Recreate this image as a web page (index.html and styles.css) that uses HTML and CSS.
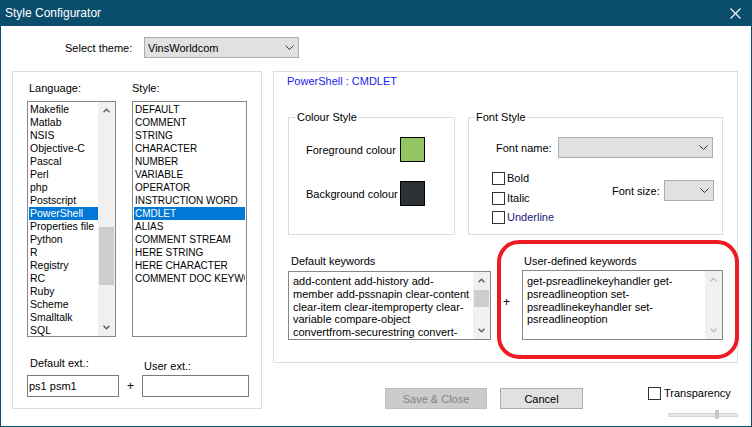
FILE: index.html
```html
<!DOCTYPE html>
<html>
<head>
<meta charset="utf-8">
<title>Style Configurator</title>
<link rel="stylesheet" href="styles.css">
</head>
<body>
<div class="window">
  <div class="titlebar">
    <span class="title">Style Configurator</span>
    <svg class="close" width="11" height="11" viewBox="0 0 11 11"><path d="M0.5 0.5L10.5 10.5M10.5 0.5L0.5 10.5" stroke="#fff" stroke-width="1.1" fill="none"/></svg>
  </div>
  <div class="content">
    <div class="theme-row">
      <span class="theme-label">Select theme:</span>
      <div class="combo theme-combo"><span class="combo-text">VinsWorldcom</span><svg class="chev" width="9" height="5" viewBox="0 0 9 5"><path d="M0.5 0.5L4.5 4.5L8.5 0.5" stroke="#333" fill="none"/></svg></div>
    </div>
    <div class="main">
      <div class="group left-group">
        <div class="lists">
          <div class="lang-col">
            <div class="lbl lang-lbl">Language:</div>
            <div class="listbox lang-list">
              <div class="items">
                <div class="item">Makefile</div>
                <div class="item">Matlab</div>
                <div class="item">NSIS</div>
                <div class="item">Objective-C</div>
                <div class="item">Pascal</div>
                <div class="item">Perl</div>
                <div class="item">php</div>
                <div class="item">Postscript</div>
                <div class="item sel">PowerShell</div>
                <div class="item">Properties file</div>
                <div class="item">Python</div>
                <div class="item">R</div>
                <div class="item">Registry</div>
                <div class="item">RC</div>
                <div class="item">Ruby</div>
                <div class="item">Scheme</div>
                <div class="item">Smalltalk</div>
                <div class="item">SQL</div>
              </div>
              <div class="vscroll">
                <div class="sb-btn"><svg width="7" height="5" viewBox="0 0 7 5"><path d="M0.5 4.2L3.5 1.2L6.5 4.2" stroke="#606060" stroke-width="1.5" fill="none"/></svg></div>
                <div class="sb-track"><div class="thumb lang-thumb"></div></div>
                <div class="sb-btn"><svg width="7" height="5" viewBox="0 0 7 5"><path d="M0.5 0.8L3.5 3.8L6.5 0.8" stroke="#606060" stroke-width="1.5" fill="none"/></svg></div>
              </div>
            </div>
          </div>
          <div class="style-col">
            <div class="lbl">Style:</div>
            <div class="listbox style-list">
              <div class="items">
                <div class="item">DEFAULT</div>
                <div class="item">COMMENT</div>
                <div class="item">STRING</div>
                <div class="item">CHARACTER</div>
                <div class="item">NUMBER</div>
                <div class="item">VARIABLE</div>
                <div class="item">OPERATOR</div>
                <div class="item">INSTRUCTION WORD</div>
                <div class="item sel">CMDLET</div>
                <div class="item">ALIAS</div>
                <div class="item">COMMENT STREAM</div>
                <div class="item">HERE STRING</div>
                <div class="item">HERE CHARACTER</div>
                <div class="item">COMMENT DOC KEYWORD</div>
              </div>
            </div>
          </div>
        </div>
        <div class="ext-row">
          <div class="def-ext">
            <div class="lbl ext-lbl">Default ext.:</div>
            <div class="input">ps1 psm1</div>
          </div>
          <div class="plus">+</div>
          <div class="user-ext">
            <div class="lbl ext-lbl user-ext-lbl">User ext.:</div>
            <div class="input"></div>
          </div>
        </div>
      </div>
      <div class="right-col">
        <div class="group right-group">
          <div class="style-title">PowerShell : CMDLET</div>
          <div class="boxes">
            <div class="box colour-box">
              <span class="legend">Colour Style</span>
              <div class="colour-row"><span class="clabel">Foreground colour</span><div class="swatch fg"></div></div>
              <div class="colour-row"><span class="clabel">Background colour</span><div class="swatch bg"></div></div>
            </div>
            <div class="box font-box">
              <span class="legend font-legend">Font Style</span>
              <div class="fontname-row">
                <span class="fn-label">Font name:</span>
                <div class="combo fn-combo"><svg class="chev" width="9" height="5" viewBox="0 0 9 5"><path d="M0.5 0.5L4.5 4.5L8.5 0.5" stroke="#333" fill="none"/></svg></div>
              </div>
              <div class="font-lower">
                <div class="checks">
                  <div class="check"><span class="cb"></span><span class="cb-text">Bold</span></div>
                  <div class="check"><span class="cb"></span><span class="cb-text">Italic</span></div>
                  <div class="check"><span class="cb"></span><span class="cb-text under">Underline</span></div>
                </div>
                <div class="fontsize">
                  <span class="fs-label">Font size:</span>
                  <div class="combo fs-combo"><svg class="chev" width="9" height="5" viewBox="0 0 9 5"><path d="M0.5 0.5L4.5 4.5L8.5 0.5" stroke="#333" fill="none"/></svg></div>
                </div>
              </div>
            </div>
          </div>
          <div class="kw-row">
            <div class="def-kw">
              <div class="lbl kw-lbl">Default keywords</div>
              <div class="textarea def-ta">
                <div class="ta-text">
                  <div class="ta-line">add-content add-history add-</div>
                  <div class="ta-line">member add-pssnapin clear-content</div>
                  <div class="ta-line">clear-item clear-itemproperty clear-</div>
                  <div class="ta-line">variable compare-object</div>
                  <div class="ta-line">convertfrom-securestring convert-</div>
                </div>
                <div class="vscroll">
                  <div class="sb-btn"><svg width="7" height="5" viewBox="0 0 7 5"><path d="M0.5 4.2L3.5 1.2L6.5 4.2" stroke="#606060" stroke-width="1.5" fill="none"/></svg></div>
                  <div class="sb-track"><div class="thumb kw-thumb"></div></div>
                  <div class="sb-btn"><svg width="7" height="5" viewBox="0 0 7 5"><path d="M0.5 0.8L3.5 3.8L6.5 0.8" stroke="#606060" stroke-width="1.5" fill="none"/></svg></div>
                </div>
              </div>
            </div>
            <div class="kw-plus">+</div>
            <div class="user-kw">
              <div class="lbl kw-lbl user-kw-lbl">User-defined keywords</div>
              <div class="textarea user-ta">
                <div class="ta-text user-text">
                  <div class="ta-line">get-psreadlinekeyhandler get-</div>
                  <div class="ta-line">psreadlineoption set-</div>
                  <div class="ta-line">psreadlinekeyhandler set-</div>
                  <div class="ta-line">psreadlineoption</div>
                </div>
                <div class="vscroll disabled">
                  <div class="sb-btn"><svg width="7" height="5" viewBox="0 0 7 5"><path d="M0.5 4.2L3.5 1.2L6.5 4.2" stroke="#c0c0c0" stroke-width="1.5" fill="none"/></svg></div>
                  <div class="sb-track"></div>
                  <div class="sb-btn"><svg width="7" height="5" viewBox="0 0 7 5"><path d="M0.5 0.8L3.5 3.8L6.5 0.8" stroke="#c0c0c0" stroke-width="1.5" fill="none"/></svg></div>
                </div>
              </div>
            </div>
          </div>
          <div class="ring"></div>
        </div>
        <div class="bottom-row">
          <div class="btn save">Save &amp; Close</div>
          <div class="btn cancel">Cancel</div>
          <div class="transp">
            <div class="transp-check"><span class="cb"></span><span class="cb-text">Transparency</span></div>
            <div class="slider"><div class="slider-track"></div><div class="slider-thumb"></div></div>
          </div>
        </div>
      </div>
    </div>
  </div>
</div>
</body>
</html>
```

FILE: styles.css
```css
html, body {
  margin: 0;
  padding: 0;
}
body {
  width: 752px;
  height: 427px;
  overflow: hidden;
  background: #ffffff;
  font-family: "Liberation Sans", Arial, sans-serif;
  font-size: 11px;
  color: #000;
}
.window {
  width: 752px;
  height: 427px;
  box-sizing: border-box;
  border: 1px solid #0b4d6d;
  border-top: none;
  display: flex;
  flex-direction: column;
  overflow: hidden;
}
.titlebar {
  height: 26px;
  flex: none;
  margin: 0 -1px;
  background: #0b4d6d;
  display: flex;
  align-items: center;
  padding-left: 5px;
  color: #fff;
  font-size: 12px;
}
.close {
  margin-left: auto;
  margin-right: 11px;
}
.content {
  flex: 1;
}
.theme-row {
  display: flex;
  align-items: center;
  height: 21px;
  margin-top: 11px;
}
.theme-label {
  margin-left: 64px;
  width: 79px;
}
.combo {
  box-sizing: border-box;
  height: 21px;
  background: #e1e1e1;
  border: 1px solid #adadad;
  display: flex;
  align-items: center;
  padding-left: 3px;
}
.combo .chev {
  margin-left: auto;
  margin-right: 4px;
}
.theme-combo {
  width: 155px;
}
.main {
  display: flex;
  margin-top: 13px;
  padding-left: 11px;
  gap: 11px;
}
.group {
  box-sizing: border-box;
  border: 1px solid #dcdcdc;
}
.left-group {
  width: 250px;
  height: 338px;
  padding: 10px 0 0 14px;
}
.lists {
  display: flex;
  gap: 16px;
}
.lang-col { width: 89px; }
.style-col { width: 115px; }
.lbl {
  height: 13px;
  line-height: 13px;
  margin-bottom: 6px;
  white-space: nowrap;
}
.lang-lbl { padding-left: 2px; }
.listbox {
  box-sizing: border-box;
  height: 236px;
  border: 1px solid #828790;
  display: flex;
  overflow: hidden;
  background: #fff;
}
.items {
  flex: 1;
  min-width: 0;
  padding: 1px 0 0 1px;
  overflow: hidden;
}
.style-list .items {
  padding: 1px 1px 0 1px;
  font-size: 10px;
}
.lang-list .items {
  font-size: 10.5px;
}
.item {
  height: 13px;
  line-height: 13px;
  padding-left: 1px;
  white-space: nowrap;
  overflow: hidden;
}
.item.sel {
  background: #0078d7;
  color: #fff;
}
.vscroll {
  width: 17px;
  flex: none;
  background: #f0f0f0;
  display: flex;
  flex-direction: column;
}
.sb-btn {
  height: 17px;
  flex: none;
  display: flex;
  align-items: center;
  justify-content: center;
}
.sb-track {
  flex: 1;
}
.thumb {
  background: #cdcdcd;
  margin: 0 1px;
}
.lang-thumb {
  margin-top: 108px;
  height: 58px;
}
.kw-thumb {
  margin-top: 1px;
  height: 17px;
}
.ext-row {
  display: flex;
  margin-top: 20px;
}
.def-ext { width: 92px; }
.user-ext { width: 107px; }
.ext-lbl {
  margin-bottom: 5px;
  padding-left: 3px;
}
.user-ext-lbl {
  padding-top: 3px;
  margin-bottom: 2px;
  padding-left: 2px;
}
.plus {
  width: 23px;
  align-self: flex-end;
  height: 22px;
  line-height: 22px;
  text-align: center;
  font-size: 12px;
}
.input {
  box-sizing: border-box;
  height: 22px;
  border: 1px solid #7a7a7a;
  padding-left: 1px;
  line-height: 20px;
  background: #fff;
}
.right-col {
  width: 465px;
  display: flex;
  flex-direction: column;
}
.right-group {
  height: 292px;
  position: relative;
  padding: 3px 0 0 13px;
}
.style-title {
  height: 13px;
  line-height: 13px;
  color: #1c1cf0;
}
.boxes {
  display: flex;
  gap: 13px;
  margin-top: 29px;
  margin-left: 1px;
}
.box {
  position: relative;
  box-sizing: border-box;
  height: 118px;
  border: 1px solid #dcdcdc;
}
.legend {
  position: absolute;
  top: -7px;
  left: 7px;
  background: #fff;
  padding: 0 1px;
  line-height: 13px;
  white-space: nowrap;
}
.font-legend { left: 6px; }
.colour-box {
  width: 167px;
  padding: 19px 0 0 17px;
}
.colour-row {
  display: flex;
  align-items: center;
  height: 25px;
}
.colour-row + .colour-row { margin-top: 19px; }
.clabel {
  width: 94px;
  white-space: nowrap;
}
.swatch {
  width: 25px;
  height: 25px;
  box-sizing: border-box;
  border: 1px solid #000;
}
.swatch.fg { background: #93c663; }
.swatch.bg { background: #2b3134; }
.font-box {
  width: 255px;
  padding-top: 19px;
}
.fontname-row {
  display: flex;
  align-items: center;
  height: 21px;
  padding-left: 27px;
}
.fn-label {
  width: 62px;
  white-space: nowrap;
}
.fn-combo { width: 155px; }
.font-lower {
  display: flex;
  margin-top: 14px;
  padding-left: 23px;
}
.checks { width: 120px; }
.check {
  display: flex;
  align-items: flex-start;
  height: 19px;
}
.check:first-child { height: 20px; }
.cb {
  width: 13px;
  height: 13px;
  box-sizing: border-box;
  border: 1px solid #333;
  background: #fff;
  flex: none;
}
.cb-text {
  margin-left: 2px;
  line-height: 13px;
  white-space: nowrap;
}
.cb-text.under { color: #20207a; }
.fontsize {
  display: flex;
  align-items: center;
  margin-top: 8px;
  height: 21px;
}
.fs-label {
  width: 52px;
  white-space: nowrap;
}
.fs-combo { width: 50px; }
.kw-row {
  display: flex;
  margin-top: 20px;
  margin-left: 1px;
}
.def-kw { width: 203px; }
.user-kw { width: 201px; }
.kw-lbl {
  margin-bottom: 3px;
  padding-left: 3px;
}
.user-kw-lbl {
  margin-bottom: 2px;
  padding-left: 2px;
}
.kw-plus {
  width: 31px;
  text-align: center;
  padding-top: 41px;
  line-height: 13px;
  font-size: 12px;
}
.textarea {
  box-sizing: border-box;
  border: 1px solid #828790;
  display: flex;
  background: #fff;
  overflow: hidden;
}
.def-ta { height: 69px; }
.user-ta { height: 70px; }
.ta-text {
  flex: 1;
  min-width: 0;
  padding: 3px 0 0 4px;
  overflow: hidden;
}
.user-text { padding-top: 4px; }
.ta-line {
  height: 12.8px;
  line-height: 12.8px;
  white-space: nowrap;
}
.ring {
  position: absolute;
  left: 223px;
  top: 168px;
  width: 242px;
  height: 119px;
  box-sizing: border-box;
  border: 4px solid #ed1c24;
  border-radius: 22px;
}
.bottom-row {
  display: flex;
  margin-top: 25px;
  padding-left: 112px;
}
.btn {
  box-sizing: border-box;
  height: 21px;
  display: flex;
  align-items: center;
  justify-content: center;
}
.save {
  width: 102px;
  background: #cccccc;
  border: 1px solid #bfbfbf;
  color: #838383;
}
.cancel {
  width: 83px;
  margin-left: 13px;
  background: #e1e1e1;
  border: 1px solid #adadad;
}
.transp {
  margin-left: 65px;
  margin-top: -1px;
  display: flex;
  flex-direction: column;
}
.transp-check {
  display: flex;
  align-items: center;
}
.transp-check .cb-text { margin-left: 3px; }
.slider {
  position: relative;
  margin-left: 20px;
  margin-top: 10px;
  width: 70px;
  height: 9px;
  display: flex;
  align-items: center;
}
.slider-track {
  width: 70px;
  height: 4px;
  box-sizing: border-box;
  background: #e7e7e7;
  border: 1px solid #d6d6d6;
}
.slider-thumb {
  position: absolute;
  left: 47px;
  top: 0;
  width: 4px;
  height: 9px;
  background: #c6c6c6;
}
```
